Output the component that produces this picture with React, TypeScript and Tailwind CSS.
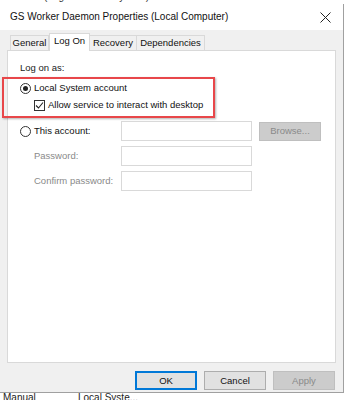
import React from "react";

const font = { fontFamily: '"Segoe UI", "Liberation Sans", Arial, sans-serif' };

function Radio({ checked }: { checked?: boolean }) {
  return (
    <span className="w-[11px] h-[11px] rounded-full border border-[#333] bg-white flex items-center justify-center shrink-0">
      {checked && <span className="w-[5px] h-[5px] rounded-full bg-[#222]" />}
    </span>
  );
}

function Input() {
  return <div className="w-[131px] h-[20px] border border-[#d9d9d9] bg-white shrink-0" />;
}

export default function App() {
  return (
    <div className="w-[354px] h-[400px] bg-white overflow-hidden relative text-[9.5px] leading-[14px] text-[#111] whitespace-nowrap" style={font}>
      <div className="h-[4px] overflow-hidden relative">
        <div className="absolute top-[-10px] left-[8px] text-[10px] text-[#333]">Service (Log On: Local System)</div>
      </div>
      <div className="w-[344px] border-r border-[#a0a0a0] flex flex-col">
        <div className="h-[26px] bg-white flex items-center justify-between pl-[10px] pr-[9px]">
          <span className="text-[10px] text-[#111]">GS Worker Daemon Properties (Local Computer)</span>
          <svg width="11" height="11" viewBox="0 0 11 11" className="mr-[3px]">
            <path d="M0.5 0.5 L10.5 10.5 M10.5 0.5 L0.5 10.5" stroke="#222" strokeWidth="1" />
          </svg>
        </div>
        <div className="bg-[#f0f0f0] h-[363px] flex flex-col px-[7px] pt-[4px] border-b border-[#a0a0a0]">
          <div className="flex items-end h-[16px] pl-[3px]">
            <div className="w-[39px] h-[15px] border border-b-0 border-[#d9d9d9] bg-[#f0f0f0] flex items-center justify-center">General</div>
            <div className="w-[41px] h-[18px] border border-b-0 border-[#d9d9d9] bg-white flex items-start justify-center -mb-[1px] relative z-10">Log On</div>
            <div className="w-[47px] h-[15px] border border-b-0 border-l-0 border-[#d9d9d9] bg-[#f0f0f0] flex items-center justify-center">Recovery</div>
            <div className="w-[68px] h-[15px] border border-b-0 border-l-0 border-[#d9d9d9] bg-[#f0f0f0] flex items-center justify-center">Dependencies</div>
          </div>
          <div className="h-[313px] bg-white border border-[#d9d9d9] flex flex-col pl-[12px] pt-[10px]">
            <div className="text-[#222]">Log on as:</div>
            <div className="flex items-center gap-[3px] mt-[6px]">
              <Radio checked />
              <span>Local System account</span>
            </div>
            <div className="flex items-center gap-[3px] mt-[3px] ml-[14px]">
              <span className="w-[11px] h-[11px] border border-[#333] bg-white flex items-center justify-center">
                <svg width="9" height="9" viewBox="0 0 9 9">
                  <path d="M1 4.5 L3.5 7 L8 1.5" stroke="#222" strokeWidth="1.1" fill="none" />
                </svg>
              </span>
              <span>Allow service to interact with desktop</span>
            </div>
            <div className="flex items-center mt-[9px]">
              <div className="flex items-center gap-[3px] w-[101px]">
                <Radio />
                <span>This account:</span>
              </div>
              <Input />
              <div className="ml-[7px] w-[62px] h-[19px] bg-[#cccccc] border border-[#bfbfbf] text-[#8a8a8a] flex items-center justify-center">Browse...</div>
            </div>
            <div className="flex items-center mt-[5px]">
              <span className="w-[101px] pl-[14px] text-[#8a8a8a]">Password:</span>
              <Input />
            </div>
            <div className="flex items-center mt-[5px]">
              <span className="w-[101px] pl-[14px] text-[#8a8a8a]">Confirm password:</span>
              <Input />
            </div>
          </div>
          <div className="flex justify-end gap-[7px] mt-[8px] pr-[1px]">
            <div className="w-[62px] h-[19px] bg-[#e1e1e1] border-2 border-[#0078d7] flex items-center justify-center">OK</div>
            <div className="w-[62px] h-[19px] bg-[#e1e1e1] border border-[#adadad] flex items-center justify-center">Cancel</div>
            <div className="w-[62px] h-[19px] bg-[#cccccc] border border-[#bfbfbf] text-[#8a8a8a] flex items-center justify-center">Apply</div>
          </div>
        </div>
      </div>
      <div className="flex text-[10px] text-[#222] leading-[12px] -mt-[1px]">
        <span className="ml-[3px] w-[75px]">Manual</span>
        <span>Local Syste...</span>
      </div>
      <div className="absolute left-[2px] top-[77px] w-[213px] h-[41px] border-[2px] border-[#e8474a] shadow-[1px_1px_2px_rgba(0,0,0,0.3)]" />
    </div>
  );
}
